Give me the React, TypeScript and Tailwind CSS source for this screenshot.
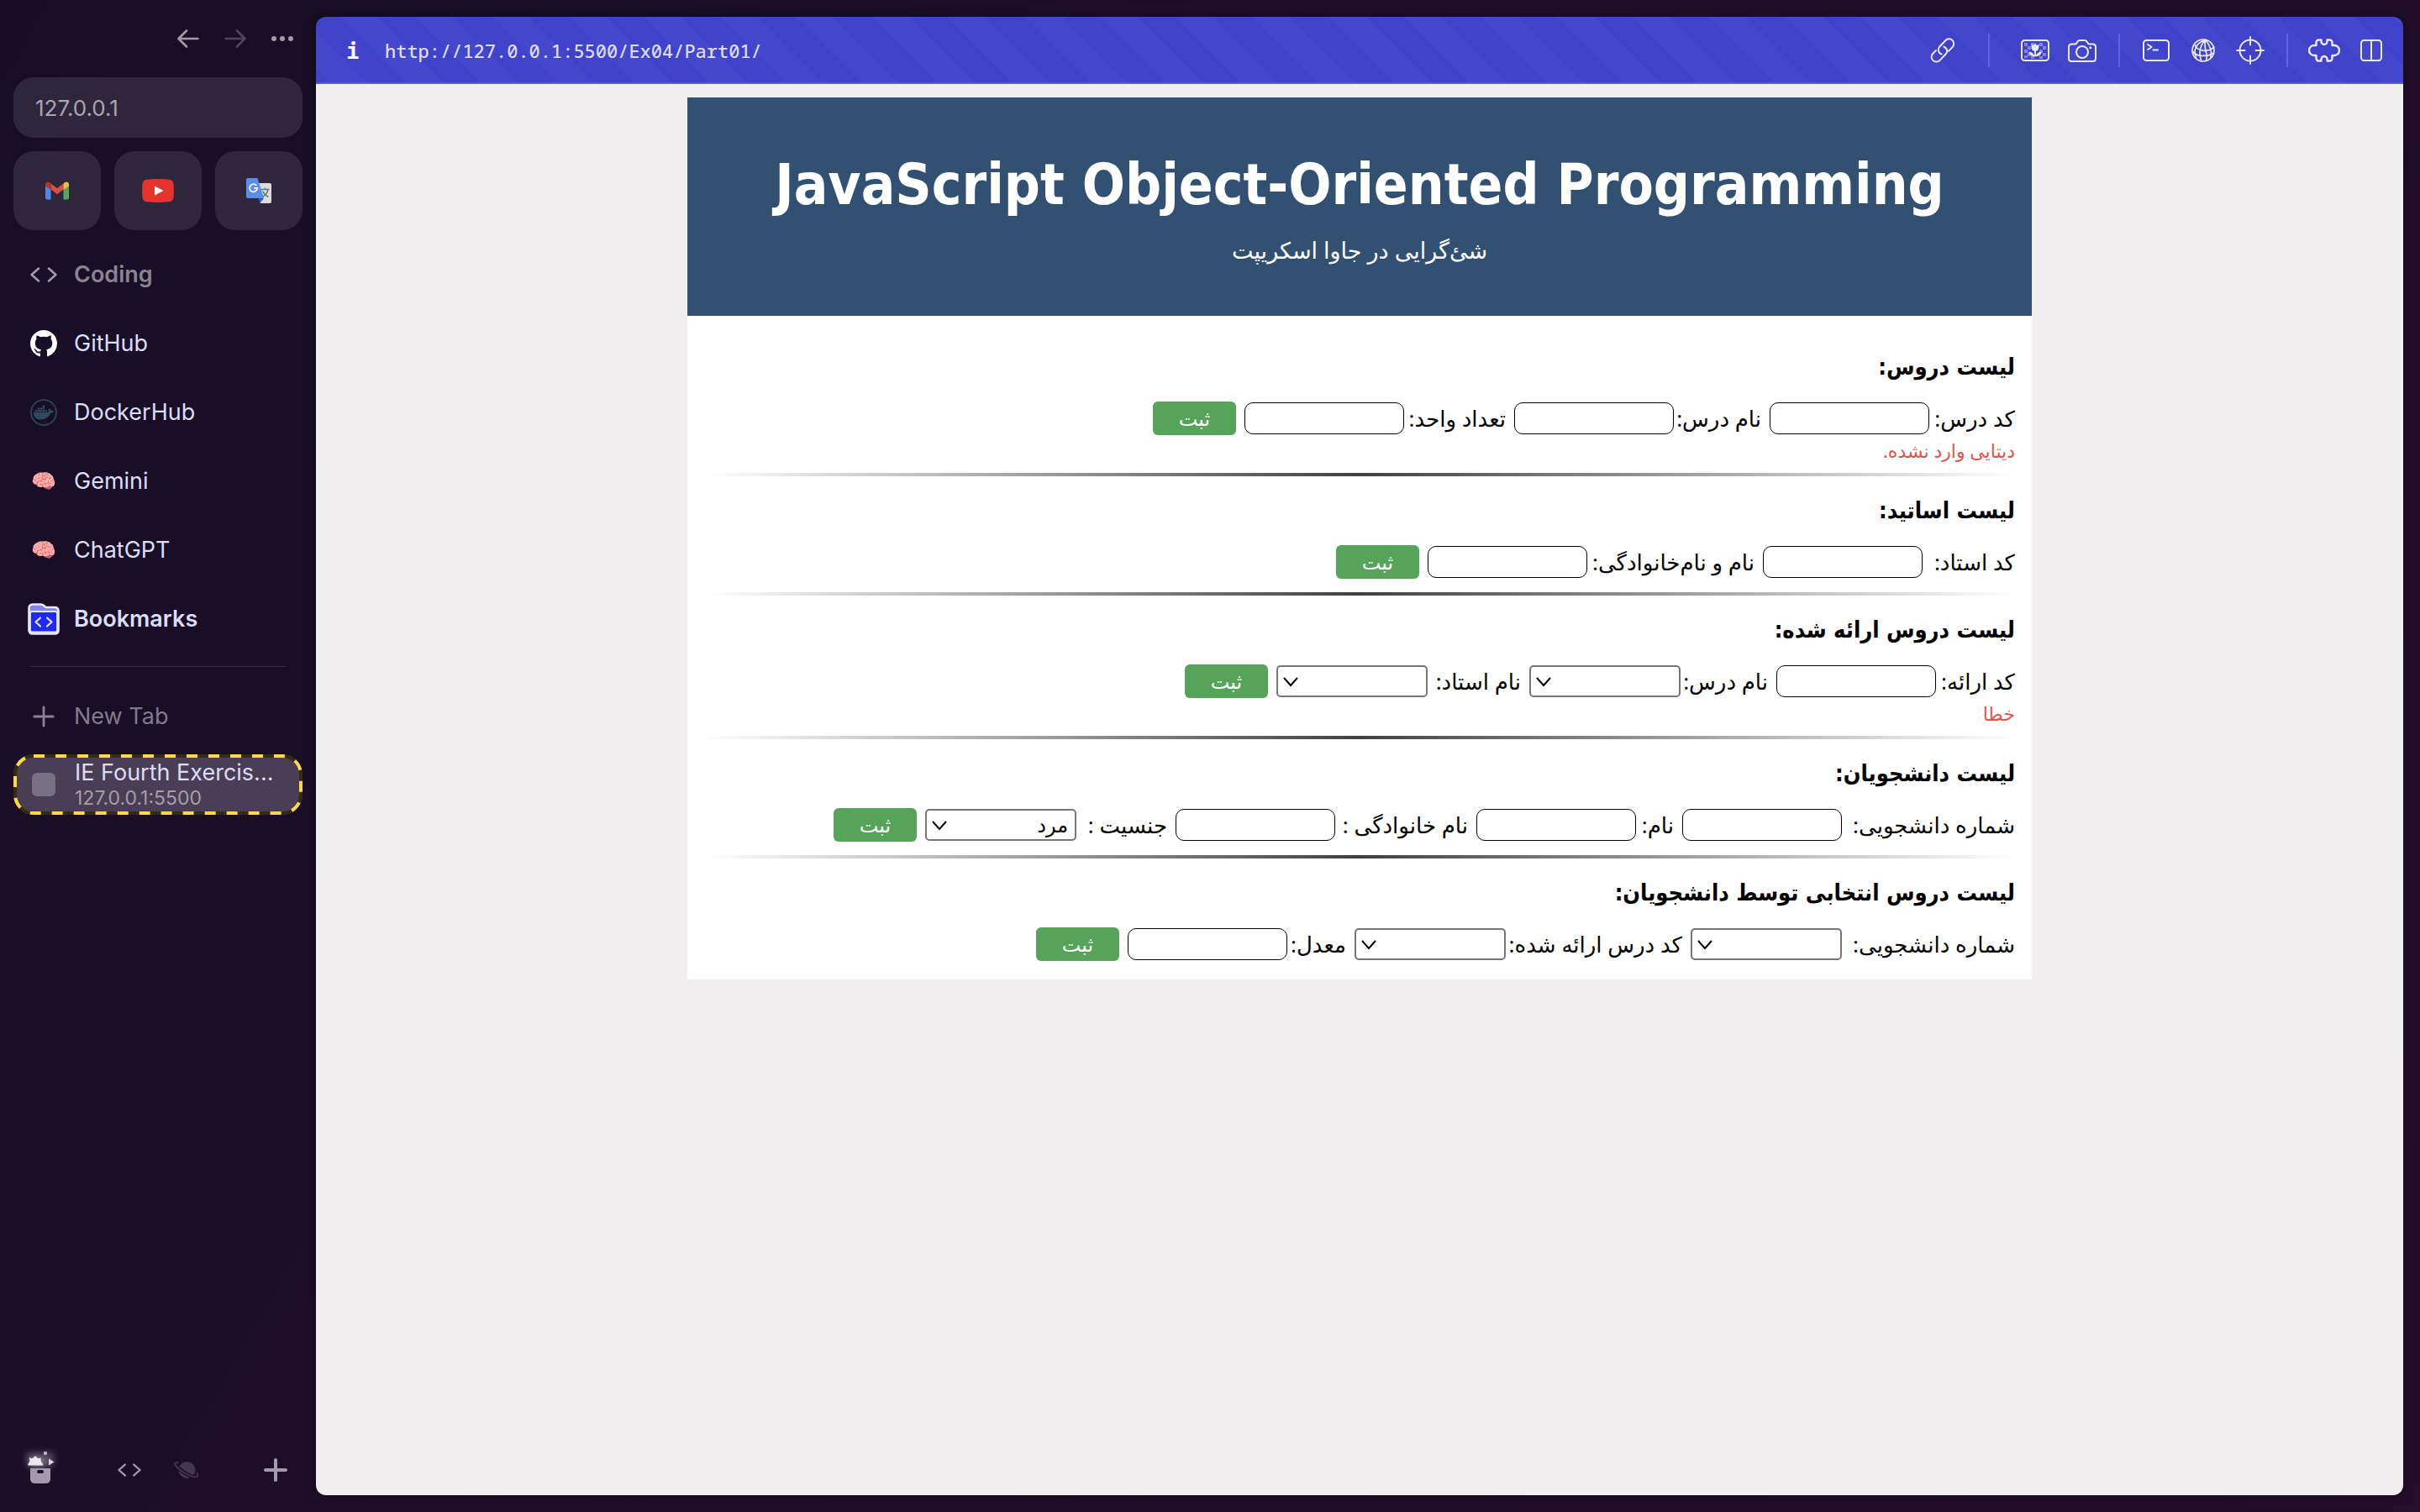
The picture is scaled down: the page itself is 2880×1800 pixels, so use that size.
import type { ReactNode } from 'react';
import { FaDocker } from 'react-icons/fa';

/* ---------- icons ---------- */

const stroke = { fill: 'none', stroke: 'currentColor', strokeLinecap: 'round', strokeLinejoin: 'round' } as const;

function CodeIcon({ className }: { className: string }) {
  return (
    <svg viewBox="0 0 32 18" className={className} {...stroke} strokeWidth="2.6">
      <path d="M10 1.6 1.6 9l8.4 7.4M22 1.6 30.4 9 22 16.4" />
    </svg>
  );
}

function PlusIcon({ className, width }: { className: string; width: number }) {
  return (
    <svg viewBox="0 0 28 28" className={className} {...stroke} strokeWidth={width}>
      <path d="M14 2v24M2 14h24" />
    </svg>
  );
}

function GithubIcon() {
  return (
    <svg viewBox="0 0 16 16" className="size-8" fill="#fff">
      <path d="M8 0C3.58 0 0 3.58 0 8c0 3.54 2.29 6.53 5.47 7.59.4.07.55-.17.55-.38 0-.19-.01-.82-.01-1.49-2.01.37-2.53-.49-2.69-.94-.09-.23-.48-.94-.82-1.13-.28-.15-.68-.52-.01-.53.63-.01 1.08.58 1.23.82.72 1.21 1.87.87 2.33.66.07-.52.28-.87.51-1.07-1.78-.2-3.64-.89-3.64-3.95 0-.87.31-1.59.82-2.15-.08-.2-.36-1.02.08-2.12 0 0 .67-.21 2.2.82.64-.18 1.32-.27 2-.27.68 0 1.36.09 2 .27 1.53-1.04 2.2-.82 2.2-.82.44 1.1.16 1.92.08 2.12.51.56.82 1.27.82 2.15 0 3.07-1.87 3.75-3.65 3.95.29.25.54.73.54 1.48 0 1.07-.01 1.93-.01 2.2 0 .21.15.46.55.38A8.013 8.013 0 0 0 16 8c0-4.42-3.58-8-8-8z" />
    </svg>
  );
}

function GmailIcon() {
  return (
    <svg viewBox="0 0 28 22" className="h-[22px] w-7">
      <path d="M0 5v14.500q0 2 2 2h4.500V9L3 4z" fill="#5086ec" />
      <path d="M28 5v14.500q0 2-2 2h-4.500V9L25 4z" fill="#58a55c" />
      <path d="M6.500 9.500v-7L14 8.200l7.500-5.700v7L14 15.300z" fill="#d85140" />
      <path d="M0 3.500v2L6.500 10V2.500L5 1.300C3 -.3 0 1 0 3.500z" fill="#b3362a" />
      <path d="M28 3.500v2L21.500 10V2.500L23 1.300C25 -.3 28 1 28 3.500z" fill="#f2be42" />
    </svg>
  );
}

function YoutubeIcon() {
  return (
    <svg viewBox="0 0 38 28" className="h-7 w-[38px]">
      <path d="M6 .8Q19-.6 32 .8q5 .4 5.500 5.200.8 8 0 16-.5 4.800-5.500 5.200-13 1.400-26 0-5-.4-5.500-5.200-.8-8 0-16Q1 1.200 6 .8z" fill="#e6342d" />
      <path d="M15 8.500v11L25.500 14z" fill="#fff" />
    </svg>
  );
}

function TranslateIcon() {
  return (
    <svg viewBox="0 0 30 30" className="size-[30px]">
      <path d="M12 6h16q2 0 2 2v20q0 2-2 2H17z" fill="#dcdcdc" />
      <path d="M14.500 24h6.500l-4.600 5.800z" fill="#3a52c4" />
      <path d="M2 0h11.500L21 24H2q-2 0-2-2V2q0-2 2-2z" fill="#5b8def" />
      <path d="M12.300 8.900A4.600 4.600 0 1 0 13.300 12H9" fill="none" stroke="#f1f4fb" strokeWidth="1.900" />
      <path d="M17.500 13.500h10M22.500 11.500v2M26 13.500c-.8 4-3.500 7-6.200 8.600M19.600 15.500c1.400 3 3.600 5.400 6.800 7" fill="none" stroke="#607d80" strokeWidth="1.400" />
    </svg>
  );
}

function DockerIcon() {
  return (
    <span className="flex size-8 items-center justify-center rounded-full border-2 border-[#2b4355] text-[#2f4a5e]">
      <FaDocker className="size-6" />
    </span>
  );
}

function FolderIcon() {
  return (
    <svg viewBox="0 0 38 38" className="size-[38px]">
      <path d="M1.500 6q0-4.500 4.500-4.500h9.500q2 0 3.500 1.300l2.500 2.200h10.500q4.500 0 4.500 4.500v22.500q0 4.500-4.500 4.500H6q-4.500 0-4.500-4.500z" fill="#7f85f5" stroke="#e9e9fb" strokeWidth="2.600" />
      <path d="M3 12q0-2 2-2h28q2 0 2 2v20.500q0 2-2 2H5q-2 0-2-2z" fill="#1d28fb" stroke="#e9e9fb" strokeWidth="1.800" />
      <path d="M15 17.500 9.500 22.500l5.500 5M23 17.500l5.500 5-5.500 5" {...stroke} stroke="#e9e9fb" strokeWidth="2.200" />
    </svg>
  );
}

function SparkleBoxIcon() {
  return (
    <svg viewBox="0 0 44 44" className="size-11 overflow-visible">
      <g fill="#fff" opacity=".55" style={{ filter: 'blur(4px)' }}>
        <path d="M8 22 5 6h34l-3 16z" opacity=".5" />
        <path d="M8 22l4-12 7 3 5-3 3 12z" />
      </g>
      <path d="M7 20.500q0-2 2.500-5l-1-4.500q2.500 1.500 4.500 1 2-2.500 3-2.500 1.500 0 2.500 2.500 2 .3 4-.6l.3 4.200q2.600 3 2.600 4.900z" fill="#eae7ee" />
      <circle cx="28" cy="6" r="2.200" fill="#bdb6c2" />
      <path d="m32 12.500 6.500 4-6.500 4z" fill="#dcd8e0" />
      <path d="M10 24h24v12q0 6-6 6H16q-6 0-6-6z" fill="#a29bab" />
      <rect x="18" y="26" width="8" height="4" rx="2" fill="#1d0e26" />
    </svg>
  );
}

function PlanetIcon() {
  return (
    <svg viewBox="0 0 30 22" className="h-[22px] w-[30px]">
      <circle cx="15.500" cy="11" r="10" fill="#44364d" />
      <path d="M5.500 2.500C2 1.500.8 3 2 5c3 4.500 16 14 23.500 14.600 3.500.2 4-2 1.500-5" fill="none" stroke="#1d0e26" strokeWidth="4.500" />
      <path d="M5.500 2.200C2 1.200.6 3 2 5.400c3 4.800 15 12.800 22.500 13.800 4 .5 5-1.800 2.500-4.800" fill="none" stroke="#44364d" strokeWidth="1.800" />
    </svg>
  );
}

function LinkIcon() {
  return (
    <svg viewBox="0 0 30 30" className="size-[30px]" {...stroke} strokeWidth="2">
      <path d="M13.500 19.500c-4-1.700-5-6-2-9.200l6.700-7c2.500-2.600 6-2.600 8.300-.3s2.400 5.800-.2 8.400l-4.300 4.300" />
      <path d="M16.300 10.500c4 1.700 5.200 6 2 9.200l-6.600 6.900c-2.500 2.600-6 2.600-8.300.3S1 21.100 3.600 18.500L7 15" />
    </svg>
  );
}

function PictureIcon() {
  return (
    <svg viewBox="0 0 34 26" className="h-[26px] w-[34px]">
      <g fill="currentColor" opacity=".4">
        <path d="M4 4h4v4H4zM12 4h4v3h-4zM22 4h4v4h-4zM8 8h4v4H8zM26 8h4v4h-4zM4 12h4v4H4zM22 12h4v4h-4zM26 16h4v4h-4zM8 16h3v4H8zM4 19h4v3H4zM12 20h4v3h-4zM22 20h4v3h-4z" />
      </g>
      <rect x="1" y="1" width="32" height="24" rx="3.500" fill="none" stroke="currentColor" strokeWidth="2" />
      <path d="M12.500 5.500 15 7l2-2.500L19 7l2.500-1.500V9c0 3-2 4.600-3.600 4.800v5.400c1-2.500 3.200-4.600 6.600-4.700 0 3.500-2.700 5.700-6.600 5.700h-1.800c-3.900 0-6.600-2.200-6.600-5.700 3.400.1 5.600 2.200 6.600 4.700v-5.400c-1.600-.2-3.600-1.800-3.600-4.800z" fill="currentColor" />
    </svg>
  );
}

function CameraIcon() {
  return (
    <svg viewBox="0 0 34 27" className="h-[27px] w-[34px]" {...stroke} strokeWidth="2">
      <path d="M4.500 5.500h4q1 0 1.600-.9l1.500-2.200Q12.500 1 14 1h6q1.500 0 2.400 1.400l1.500 2.200q.6.900 1.600.9h4q3.500 0 3.500 3.500v13.500Q33 26 29.500 26h-25Q1 26 1 22.500V9q0-3.500 3.500-3.500z" />
      <circle cx="17" cy="15" r="7" />
      <circle cx="26.800" cy="9.700" r="1.500" fill="currentColor" stroke="none" />
    </svg>
  );
}

function TerminalIcon() {
  return (
    <svg viewBox="0 0 32 26" className="h-[26px] w-8" {...stroke} strokeWidth="2">
      <rect x="1" y="1" width="30" height="24" rx="3.500" />
      <path d="m6 6 4.500 3L6 12M12.500 12.500h5.500" />
    </svg>
  );
}

function GlobeIcon() {
  return (
    <svg viewBox="0 0 28 28" className="size-7" {...stroke} strokeWidth="1.700">
      <circle cx="14" cy="14" r="13" />
      <path d="M16.500 1.200C10 3.500 5.500 8 4.200 13.500c-.3 2.500 0 5 1.300 8.500M16.500 1.200C12 6 9.800 12 10 18.500c.2 3 .8 5.500 2 8.300M16.500 1.200c-.8 5-.6 11 1.500 17 .6 2.600.4 5-.6 8.300M16.500 1.200c3.500 4 6 8.800 7 15 .2 2 0 4-.7 6.500" />
      <path d="M4.500 7.500c-.5 3 4.500 6.500 10.500 6.800 5 .2 9-1.300 11.800-4.300M1.200 15c2 3.200 6 5 11 5.400 5 .3 9.500-.6 13.500-3" />
    </svg>
  );
}

function TargetIcon() {
  return (
    <svg viewBox="0 0 34 34" className="size-[34px]" {...stroke} strokeWidth="2">
      <circle cx="17" cy="17" r="12.500" />
      <path d="M17 1v9.500M17 23.500V33M1 17h9.500M23.500 17H33" />
    </svg>
  );
}

function PuzzleIcon() {
  return (
    <svg viewBox="0 0 38 28" className="h-7 w-[38px]" {...stroke} strokeWidth="2.400">
      <path d="M9.500 4.500a3 3 0 0 1 3-3h3v2a3.500 3.500 0 0 0 7 0v-2h3a3 3 0 0 1 3 3V8h2.500a6 6 0 0 1 0 12h-2.500v3.500a3 3 0 0 1-3 3h-3v-2a3.500 3.500 0 0 0-7 0v2h-3a3 3 0 0 1-3-3V20H7A6 6 0 0 1 7 8h2.500z" />
    </svg>
  );
}

function PanelIcon() {
  return (
    <svg viewBox="0 0 26 26" className="size-[26px]" {...stroke} strokeWidth="2">
      <rect x="1" y="1" width="24" height="24" rx="3.500" />
      <path d="M13 1v24" />
    </svg>
  );
}

/* ---------- sidebar ---------- */

function NavRow({ icon, label, className = 'font-normal text-[#dcdcfb]' }: { icon: ReactNode; label: string; className?: string }) {
  return (
    <a href="#" className={`flex h-[82px] items-center gap-4 pl-4 text-[27px] leading-8 ${className}`}>
      <span className="flex w-10 justify-center">{icon}</span>
      <span>{label}</span>
    </a>
  );
}

function Tile({ label, children }: { label: string; children: ReactNode }) {
  return (
    <button aria-label={label} className="flex h-[94px] flex-1 items-center justify-center rounded-3xl bg-white/10">
      {children}
    </button>
  );
}

const brain = <span className="text-[24px] leading-8">🧠</span>;

function Sidebar() {
  return (
    <aside className="flex w-[376px] shrink-0 flex-col px-4 font-['Inter']">
      <div className="flex h-[92px] items-center justify-end gap-[30px] pr-[11px] text-[#a19ba8]">
        <button aria-label="Back">
          <svg viewBox="0 0 26 22" className="h-[22px] w-[26px]" {...stroke} strokeWidth="2.600">
            <path d="M11 1.500 1.500 11l9.500 9.500M2 11h22.500" />
          </svg>
        </button>
        <button aria-label="Forward" className="text-[#50475a]">
          <svg viewBox="0 0 26 22" className="h-[22px] w-[26px]" {...stroke} strokeWidth="2.600">
            <path d="m15 1.500 9.500 9.500-9.500 9.500M24 11H1.500" />
          </svg>
        </button>
        <button aria-label="More">
          <svg viewBox="0 0 26 6" className="h-1.5 w-[26px]" fill="currentColor">
            <circle cx="3" cy="3" r="3" />
            <circle cx="13" cy="3" r="3" />
            <circle cx="23" cy="3" r="3" />
          </svg>
        </button>
      </div>

      <input
        aria-label="Address"
        defaultValue="127.0.0.1"
        className="h-[72px] shrink-0 rounded-3xl bg-white/10 px-[26px] text-[26px] text-[#aaa5b0] outline-none"
      />

      <div className="mt-4 flex gap-4">
        <Tile label="Gmail"><GmailIcon /></Tile>
        <Tile label="YouTube"><YoutubeIcon /></Tile>
        <Tile label="Translate"><TranslateIcon /></Tile>
      </div>

      <nav className="mt-3">
        <NavRow icon={<CodeIcon className="h-[18px] w-8 text-[#a19ba8]" />} label="Coding" className="font-semibold text-[#8a8491]" />
        <NavRow icon={<GithubIcon />} label="GitHub" />
        <NavRow icon={<DockerIcon />} label="DockerHub" />
        <NavRow icon={brain} label="Gemini" />
        <NavRow icon={brain} label="ChatGPT" />
        <NavRow icon={<FolderIcon />} label="Bookmarks" className="font-semibold text-[#dcdcfb]" />
      </nav>

      <hr className="mx-5 mt-[15px] border-t border-[#3a3046]" />

      <div className="mt-[18px]">
        <NavRow icon={<PlusIcon className="size-[26px] text-[#8a8491]" width={3} />} label="New Tab" className="font-normal text-[#827b8a]" />
      </div>

      <a href="#" className="relative mt-1 flex h-[72px] items-center gap-[23px] rounded-3xl bg-[#493e54] pl-[22px]">
        <svg className="absolute inset-0 size-full" fill="none" strokeWidth="4">
          <rect x="2" y="2" rx="22" className="h-[calc(100%-4px)] w-[calc(100%-4px)]" stroke="#332b12" />
          <rect x="2" y="2" rx="22" className="h-[calc(100%-4px)] w-[calc(100%-4px)]" stroke="#fdd847" strokeDasharray="13 13" />
        </svg>
        <span className="size-7 rounded-md bg-[#777083]" />
        <span className="flex flex-col">
          <span className="text-[27px] leading-8 text-[#dcdcfb]">IE Fourth Exercis...</span>
          <span className="text-[23px] leading-7 text-[#a49ea9]">127.0.0.1:5500</span>
        </span>
      </a>

      <div className="mt-auto mb-5 flex h-[60px] items-center text-[#a29bab]">
        <button aria-label="Archive" className="mb-2 ml-[10px]"><SparkleBoxIcon /></button>
        <button aria-label="Coding space" className="ml-[70px]"><CodeIcon className="h-4 w-7" /></button>
        <button aria-label="Planet space" className="ml-[39px]"><PlanetIcon /></button>
        <button aria-label="New" className="mr-[18px] ml-auto"><PlusIcon className="size-7" width={4} /></button>
      </div>
    </aside>
  );
}

/* ---------- toolbar ---------- */

function Tool({ label, children }: { label: string; children: ReactNode }) {
  return <button aria-label={label} className="flex h-14 w-14 items-center justify-center">{children}</button>;
}

function Toolbar() {
  return (
    <header className="flex h-20 shrink-0 items-center bg-[repeating-linear-gradient(45deg,#3f43ca_0px,#3f43ca_12px,#4347cc_12px,#4347cc_44px,#3f43ca_44px,#3f43ca_64px)] pr-[10px] pl-7 text-[#e9e9fb] shadow-[inset_0_-2px_0_#5a5cd3]">
      <button aria-label="Site information" className="w-8 font-['Noto_Sans_Mono','DejaVu_Sans_Mono',monospace] text-[26px] font-bold text-white">i</button>
      <span className="ml-[22px] font-['Noto_Sans_Mono','DejaVu_Sans_Mono',monospace] text-[22px] font-medium text-[#dcdcf6]">
        http://127.0.0.1:5500/Ex04/Part01/
      </span>
      <div className="ml-auto flex items-center">
        <Tool label="Copy link"><LinkIcon /></Tool>
        <span className="mx-[26px] h-10 w-0.5 bg-[#5f63e6]" />
        <Tool label="Images"><PictureIcon /></Tool>
        <Tool label="Screenshot"><CameraIcon /></Tool>
        <span className="mx-[15px] h-10 w-0.5 bg-[#5f63e6]" />
        <Tool label="Console"><TerminalIcon /></Tool>
        <Tool label="Network"><GlobeIcon /></Tool>
        <Tool label="Inspect"><TargetIcon /></Tool>
        <span className="mx-[15px] h-10 w-0.5 bg-[#5f63e6]" />
        <Tool label="Extensions"><PuzzleIcon /></Tool>
        <Tool label="Split view"><PanelIcon /></Tool>
      </div>
    </header>
  );
}

/* ---------- page ---------- */

type Field = { id: string; label: string; width: string; options?: string[] };

function FieldControl({ id, label, width, options }: Field) {
  return (
    <>
      <label htmlFor={id} className={`whitespace-nowrap ${width}`}>{label}</label>
      {options ? (
        <span className="relative flex">
          <select id={id} className="h-[38px] w-[180px] appearance-none rounded-[5px] border-2 border-[#767676] bg-white pr-2 pl-9 text-[24px] leading-8">
            {options.map((o) => <option key={o}>{o}</option>)}
          </select>
          <svg viewBox="0 0 18 12" className="pointer-events-none absolute top-[14px] left-2 h-3 w-[18px]" fill="none" stroke="#000" strokeWidth="2">
            <path d="m1 1 8 9 8-9" />
          </svg>
        </span>
      ) : (
        <input id={id} className="h-[38px] w-[190px] rounded-[10px] border border-black bg-white px-2" />
      )}
    </>
  );
}

function FormSection({ title, fields, error, last }: { title: string; fields: Field[]; error?: string; last?: boolean }) {
  return (
    <section>
      <h3 className="my-[26px] font-['DejaVu_Sans_Condensed','DejaVu_Sans',sans-serif] text-[27px] leading-[30px] font-bold">{title}</h3>
      <form className="flex h-10 items-center gap-[10px]">
        {fields.map((f) => <FieldControl key={f.id} {...f} />)}
        <button type="button" className="h-10 w-[99px] rounded-md bg-[#56a35a] text-[24px] leading-8 text-white">ثبت</button>
      </form>
      {error && <p className="-mb-2 text-[22px] leading-[37px] text-[#e0544e]">{error}</p>}
      {!last && <hr className="mt-4 h-1 border-0 bg-[linear-gradient(to_right,transparent,#404040,transparent)]" />}
    </section>
  );
}

function Page() {
  return (
    <div className="flex-1 overflow-auto bg-[#f0eeef] px-8 pt-4">
      <div className="mx-auto max-w-[1600px] bg-white font-['Noto_Sans','DejaVu_Sans',sans-serif] text-[26px] text-black">
        <header className="flex flex-col items-center bg-[#315072] pt-[60px] pb-[60px] text-white">
          <h1 className="font-['DejaVu_Sans_Condensed','DejaVu_Sans',sans-serif] text-[67px] leading-[88px] font-bold">JavaScript Object-Oriented Programming</h1>
          <p dir="rtl" className="mt-4 text-[27px] leading-9">شئ‌گرایی در جاوا اسکریپت</p>
        </header>
        <main dir="rtl" className="flow-root px-5 pt-5 pb-[22px]">
          <FormSection
            title="لیست دروس:"
            fields={[
              { id: 'course-code', label: 'کد درس:', width: 'w-[92px]' },
              { id: 'course-name', label: 'نام درس:', width: 'w-[94px]' },
              { id: 'course-units', label: 'تعداد واحد:', width: 'w-[111px]' },
            ]}
            error="دیتایی وارد نشده."
          />
          <FormSection
            title="لیست اساتید:"
            fields={[
              { id: 'teacher-code', label: 'کد استاد:', width: 'w-[100px]' },
              { id: 'teacher-name', label: 'نام و نام‌خانوادگی:', width: 'w-[189px]' },
            ]}
          />
          <FormSection
            title="لیست دروس ارائه شده:"
            fields={[
              { id: 'offer-code', label: 'کد ارائه:', width: 'w-[84px]' },
              { id: 'offer-course', label: 'نام درس:', width: 'w-[94px]', options: [''] },
              { id: 'offer-teacher', label: 'نام استاد:', width: 'w-[101px]', options: [''] },
            ]}
            error="خطا"
          />
          <FormSection
            title="لیست دانشجویان:"
            fields={[
              { id: 'student-id', label: 'شماره دانشجویی:', width: 'w-[196px]' },
              { id: 'student-first', label: 'نام:', width: 'w-[35px]' },
              { id: 'student-last', label: 'نام خانوادگی :', width: 'w-[148px]' },
              { id: 'student-gender', label: 'جنسیت :', width: 'w-[98px]', options: ['مرد', 'زن'] },
            ]}
          />
          <FormSection
            title="لیست دروس انتخابی توسط دانشجویان:"
            fields={[
              { id: 'pick-student', label: 'شماره دانشجویی:', width: 'w-[196px]', options: [''] },
              { id: 'pick-offer', label: 'کد درس ارائه شده:', width: 'w-[200px]', options: [''] },
              { id: 'pick-grade', label: 'معدل:', width: 'w-[60px]' },
            ]}
            last
          />
        </main>
      </div>
    </div>
  );
}

export default function App() {
  return (
    <div className="flex h-screen bg-[linear-gradient(120deg,#170e25_0%,#190e26_20%,#1e0d27_35%,#240f2a_100%)]">
      <Sidebar />
      <div className="my-5 mr-5 flex min-w-0 flex-1 flex-col overflow-hidden rounded-xl shadow-[0_0_14px_rgba(0,0,0,0.45)]">
        <Toolbar />
        <Page />
      </div>
    </div>
  );
}
